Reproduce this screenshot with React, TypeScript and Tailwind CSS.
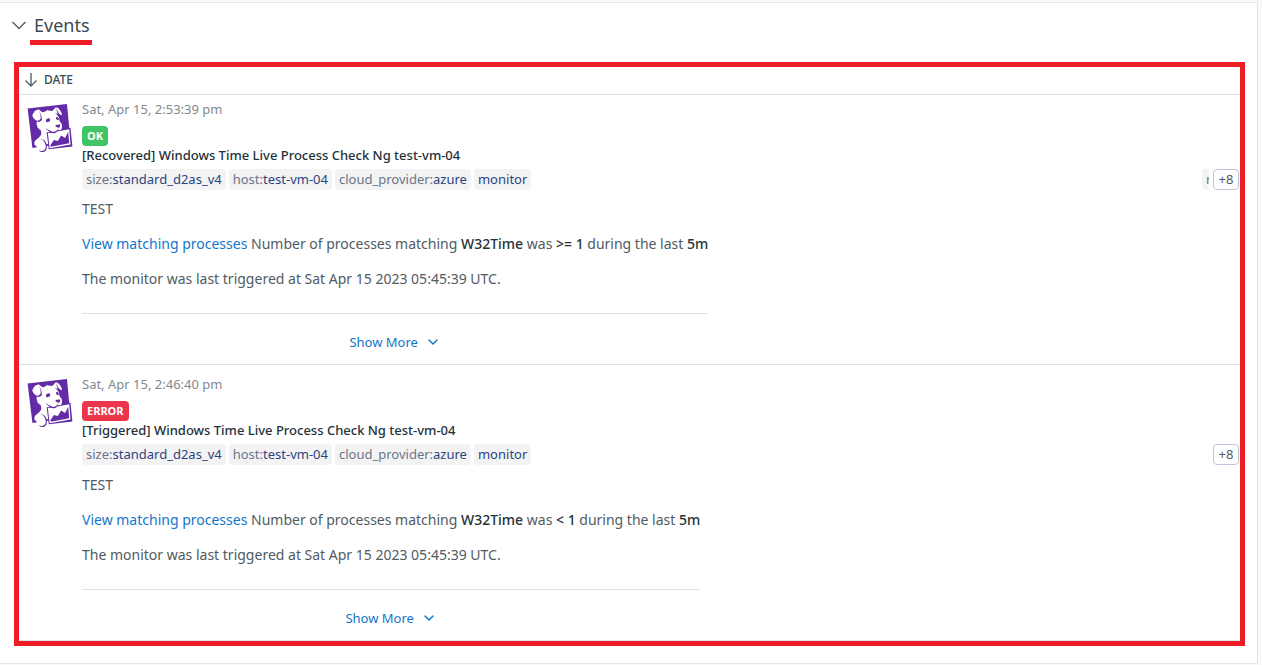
import { ChevronDown } from "lucide-react";
import { SiDatadog } from "react-icons/si";

type Tag = { name?: string; value: string };

type MonitorEvent = {
  id: string;
  date: string;
  status: "OK" | "ERROR";
  title: string;
  condition: string;
  clippedTag?: string;
};

const tags: Tag[] = [
  { name: "size", value: "standard_d2as_v4" },
  { name: "host", value: "test-vm-04" },
  { name: "cloud_provider", value: "azure" },
  { value: "monitor" },
];

const events: MonitorEvent[] = [
  {
    id: "recovered",
    date: "Sat, Apr 15, 2:53:39 pm",
    status: "OK",
    title: "[Recovered] Windows Time Live Process Check Ng test-vm-04",
    condition: ">= 1",
    clippedTag: "r",
  },
  {
    id: "triggered",
    date: "Sat, Apr 15, 2:46:40 pm",
    status: "ERROR",
    title: "[Triggered] Windows Time Live Process Check Ng test-vm-04",
    condition: "< 1",
  },
];

const badgeColors = {
  OK: "bg-[#41c464]",
  ERROR: "bg-[#eb364b]",
};

function TagList({ clippedTag }: { clippedTag?: string }) {
  return (
    <div className="mt-1 flex items-center gap-[3px]">
      {tags.map((tag) => (
        <span
          key={tag.value}
          className="h-[21px] shrink-0 rounded bg-[#f3f3f4] px-1 leading-5 whitespace-nowrap text-[#2b4480]"
        >
          {tag.name && <span className="text-[#6b7489]">{tag.name}:</span>}
          {tag.value}
        </span>
      ))}
      <div className="ml-auto flex shrink-0 gap-1">
        {clippedTag && (
          <span className="h-[21px] w-[7px] overflow-hidden rounded-l bg-[#f3f3f4] pl-1 leading-5 text-[#6b7489]">
            {clippedTag}
          </span>
        )}
        <button
          type="button"
          aria-label="Show 8 more tags"
          className="h-[21px] w-[26px] rounded border border-[#c1c5d8] bg-white text-center leading-[18px] text-[#515b62]"
        >
          +8
        </button>
      </div>
    </div>
  );
}

function EventRow({ event, first }: { event: MonitorEvent; first: boolean }) {
  return (
    <tr className="border-b border-[#dfe1ec]">
      <td className={first ? "p-0 pt-1" : "p-0 pt-[9px]"}>
        <div className="flex items-start pr-px pl-[7px]">
          <SiDatadog className="mt-[5px] size-12 shrink-0 text-[#632ca6]" aria-label="Datadog" />
          <div className="ml-2 min-w-0 flex-1">
            <div className="text-[#84898d]">{event.date}</div>
            <div className="mt-[7px] flex">
              <span
                className={`${badgeColors[event.status]} rounded px-[5px] text-[11px] leading-5 font-bold text-white`}
              >
                {event.status}
              </span>
            </div>
            <div className="-mt-px font-medium text-[#24323a]">{event.title}</div>
            <TagList clippedTag={event.clippedTag} />
            <div className={`${first ? "mt-[9px]" : "mt-[10px]"} w-fit text-sm leading-5`}>
              <p>TEST</p>
              <p className="mt-[15px]">
                <a href="#processes" className="text-[#1376cb]">
                  View matching processes
                </a>{" "}
                Number of processes matching <strong className="font-medium text-[#24323a]">W32Time</strong> was{" "}
                <strong className="font-medium text-[#24323a]">{event.condition}</strong> during the last{" "}
                <strong className="font-medium text-[#24323a]">5m</strong>
              </p>
              <p className="mt-[15px]">The monitor was last triggered at Sat Apr 15 2023 05:45:39 UTC.</p>
              <hr className="mt-6 border-[#dfe1ec]" />
              <div className="mt-[18px] mb-3 flex justify-center">
                <button type="button" className="flex items-center gap-[7px] text-[13px] leading-5 text-[#1376cb]">
                  Show More
                  <ChevronDown className="size-4" strokeWidth={2.2} aria-hidden />
                </button>
              </div>
            </div>
          </div>
        </div>
      </td>
    </tr>
  );
}

export default function App() {
  return (
    <div className="bg-[#f9fafc] pt-[2px] pr-1 pb-px font-['Noto_Sans','Open_Sans',sans-serif] text-[13px] leading-5 text-[#505b62]">
      <section className="border-y border-r border-[#e2e3ee] bg-white pr-3 pb-[17px] pl-[14px]">
        <h2 className="flex h-[59px] items-start pt-2 text-[18px] leading-7 font-normal text-[#3c4850]">
          <button type="button" className="-ml-1 flex items-start">
            <svg viewBox="0 0 18 28" className="h-7 w-[18px]" fill="none" stroke="#56626a" strokeWidth="1.5" aria-hidden>
              <path d="M2.500 11 9 17.500l6.500-6.500" />
            </svg>
            <span className="ml-[2px] border-b-5 border-[#ee1c24] pr-[2px] pb-px pl-1">Events</span>
          </button>
        </h2>
        <div className="border-5 border-[#ee1c24]">
          <table className="w-full border-collapse">
            <thead>
              <tr className="border-b border-[#dfe1ec]">
                <th scope="col" className="h-[27px] p-0 pb-px pl-1 text-left text-xs font-medium text-[#3c4850]">
                  <span className="flex items-center gap-[5px]">
                    <svg viewBox="0 0 16 16" className="size-4" fill="none" stroke="#56626a" strokeWidth="1.4" aria-hidden>
                      <path d="M8 1v13M2.500 8.500 8 14l5.500-5.500" />
                    </svg>
                    DATE
                  </span>
                </th>
              </tr>
            </thead>
            <tbody>
              {events.map((event, index) => (
                <EventRow key={event.id} event={event} first={index === 0} />
              ))}
            </tbody>
          </table>
        </div>
      </section>
    </div>
  );
}
